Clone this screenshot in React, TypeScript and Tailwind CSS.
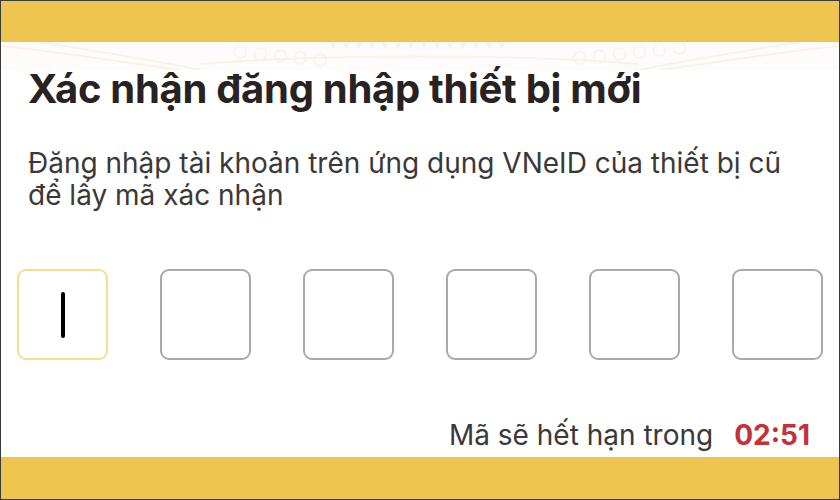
import React from "react";

const FONT = { fontFamily: 'Inter, "Noto Sans", "Liberation Sans", sans-serif' };

function Pattern() {
  return (
    <svg className="block h-[28px] w-full opacity-60" viewBox="0 0 840 28" preserveAspectRatio="none">
      <rect width="840" height="28" fill="#fdfbf7" />
      <g fill="none" stroke="#f7e9dc" strokeWidth="2">
        <path d="M0 4 C60 10 120 20 180 28" />
        <path d="M40 0 C90 8 150 18 200 28" />
        <path d="M840 4 C780 10 720 20 660 28" />
        <path d="M800 0 C750 8 690 18 640 28" />
        <path d="M200 22 C320 12 520 12 640 22" />
      </g>
      <g fill="#f9e6d4">
        {Array.from({ length: 14 }).map((_, i) => (
          <polygon key={i} points={`${330 + i * 13},1 ${336 + i * 13},1 ${333 + i * 13},7`} />
        ))}
      </g>
      <g fill="none" stroke="#f5ebe2" strokeWidth="1.5">
        {Array.from({ length: 6 }).map((_, i) => (
          <circle key={i} cx={580 + i * 20} cy={16 - i * 2} r="6" />
        ))}
        {Array.from({ length: 5 }).map((_, i) => (
          <circle key={i} cx={240 + i * 20} cy={10 + i * 2} r="6" />
        ))}
      </g>
    </svg>
  );
}

export default function App() {
  const boxes = [0, 1, 2, 3, 4, 5];
  return (
    <div className="flex h-[500px] w-[840px] flex-col overflow-hidden border border-[#3a3a3a] bg-white" style={FONT}>
      <div className="h-[41px] shrink-0 bg-[#efc552]" />
      <div className="relative flex-1">
        <div className="absolute inset-x-0 top-0">
          <Pattern />
        </div>
        <div className="relative flex h-full flex-col px-[27px]">
          <h1 className="mt-[23px] whitespace-nowrap text-[40px] font-bold leading-[48px] tracking-[-0.3px] text-[#282222]">
            Xác nhận đăng nhập thiết bị mới
          </h1>
          <p className="mt-[34px] whitespace-nowrap text-[28px] leading-[32px] text-[#3b3838]">
            Đăng nhập tài khoản trên ứng dụng VNeID của thiết bị cũ
            <br />
            để lấy mã xác nhận
          </p>
          <div className="-mx-[11px] mt-[58px] flex justify-between">
            {boxes.map((i) => (
              <div
                key={i}
                className={`flex h-[91px] w-[91px] items-center justify-center rounded-[9px] border-2 ${
                  i === 0 ? "border-[#f3e18a]" : "border-[#a9a9a9]"
                }`}
              >
                {i === 0 && <div className="h-[46px] w-[4px] rounded-full bg-black" />}
              </div>
            ))}
          </div>
          <div className="mt-[59px] flex items-baseline justify-end gap-[21px] pr-[2px] leading-[32px]">
            <span className="text-[28px] text-[#3b3838]">Mã sẽ hết hạn trong</span>
            <span className="text-[28px] font-bold text-[#c3313b]">02:51</span>
          </div>
        </div>
      </div>
      <div className="h-[42px] shrink-0 bg-[#efc552]" />
    </div>
  );
}
